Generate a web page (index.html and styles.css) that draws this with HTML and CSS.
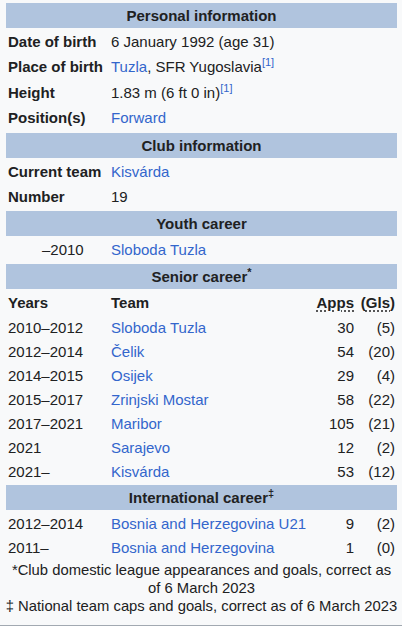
FILE: index.html
```html
<!DOCTYPE html>
<html lang="en">
<head>
<meta charset="utf-8">
<title>Infobox</title>
<link rel="stylesheet" href="styles.css">
</head>
<body>
<div class="infobox">
  <div class="hdr">Personal information</div>
  <div class="row"><div class="lbl">Date of birth</div><div class="val">6 January 1992 (age 31)</div></div>
  <div class="row"><div class="lbl">Place of birth</div><div class="val"><a href="#">Tuzla</a>, SFR Yugoslavia<sup class="ref"><a href="#">[1]</a></sup></div></div>
  <div class="row"><div class="lbl">Height</div><div class="val">1.83 m (6 ft 0 in)<sup class="ref"><a href="#">[1]</a></sup></div></div>
  <div class="row"><div class="lbl">Position(s)</div><div class="val"><a href="#">Forward</a></div></div>

  <div class="hdr">Club information</div>
  <div class="row"><div class="lbl">Current team</div><div class="val"><a href="#">Kisvárda</a></div></div>
  <div class="row"><div class="lbl">Number</div><div class="val">19</div></div>

  <div class="hdr">Youth career</div>
  <div class="row youth-row"><div class="yr youth">–2010</div><div class="val"><a href="#">Sloboda Tuzla</a></div></div>

  <div class="hdr">Senior career<sup class="mark">*</sup></div>
  <div class="crow head"><div class="lbl">Years</div><div class="lbl">Team</div><div class="num lbl"><abbr title="Appearances">Apps</abbr></div><div class="gls lbl">(<abbr title="Goals">Gls</abbr>)</div></div>
  <div class="crow"><div>2010–2012</div><div><a href="#">Sloboda Tuzla</a></div><div class="num">30</div><div class="gls">(5)</div></div>
  <div class="crow"><div>2012–2014</div><div><a href="#">Čelik</a></div><div class="num">54</div><div class="gls">(20)</div></div>
  <div class="crow"><div>2014–2015</div><div><a href="#">Osijek</a></div><div class="num">29</div><div class="gls">(4)</div></div>
  <div class="crow"><div>2015–2017</div><div><a href="#">Zrinjski Mostar</a></div><div class="num">58</div><div class="gls">(22)</div></div>
  <div class="crow"><div>2017–2021</div><div><a href="#">Maribor</a></div><div class="num">105</div><div class="gls">(21)</div></div>
  <div class="crow"><div>2021</div><div><a href="#">Sarajevo</a></div><div class="num">12</div><div class="gls">(2)</div></div>
  <div class="crow"><div>2021–</div><div><a href="#">Kisvárda</a></div><div class="num">53</div><div class="gls">(12)</div></div>

  <div class="hdr">International career<sup class="mark">‡</sup></div>
  <div class="crow"><div>2012–2014</div><div><a href="#">Bosnia and Herzegovina U21</a></div><div class="num">9</div><div class="gls">(2)</div></div>
  <div class="crow"><div>2011–</div><div><a href="#">Bosnia and Herzegovina</a></div><div class="num">1</div><div class="gls">(0)</div></div>

  <div class="foot">
    <div>*Club domestic league appearances and goals, correct as of 6 March 2023</div>
    <div class="note-wide">‡ National team caps and goals, correct as of 6 March 2023</div>
  </div>
</div>
</body>
</html>
```

FILE: styles.css
```css
html, body {
  margin: 0;
  padding: 0;
  background: #ffffff;
}

.infobox {
  background: #f8f9fa;
  color: #202122;
  font-family: "Liberation Sans", Arial, sans-serif;
  font-size: 15px;
  padding: 3px 5px 3px 6px;
  display: flex;
  flex-direction: column;
  gap: 3px;
  border-bottom: 1px solid #a2a9b1;
}

a {
  color: #3366cc;
  text-decoration: none;
}

.hdr {
  background: #b0c4de;
  font-weight: bold;
  text-align: center;
  height: 25px;
  line-height: 25px;
}

.row {
  display: grid;
  grid-template-columns: 103px 1fr;
  height: 22.4px;
  line-height: 22.4px;
  padding: 0 2px;
}

.row.youth-row {
  height: 22px;
  line-height: 22px;
}

.lbl {
  font-weight: bold;
  white-space: nowrap;
}

.youth {
  padding-left: 34px;
}

.crow {
  display: grid;
  grid-template-columns: 103px 1fr 48px 41px;
  height: 21px;
  line-height: 21px;
  padding: 0 2px;
  white-space: nowrap;
}

.crow.head {
  height: 22px;
  line-height: 22px;
}

.num,
.gls {
  text-align: right;
}

abbr {
  text-decoration: underline dotted;
  text-underline-offset: 2px;
}

sup {
  line-height: 0;
  vertical-align: super;
}

.ref {
  font-size: 11px;
}

.mark {
  font-size: 11px;
  font-weight: bold;
}

.foot {
  text-align: center;
  font-size: 14.8px;
  line-height: 18px;
  padding: 0 0 7px;
}

.note-wide {
  white-space: nowrap;
  margin: 0 -5px;
}
```
